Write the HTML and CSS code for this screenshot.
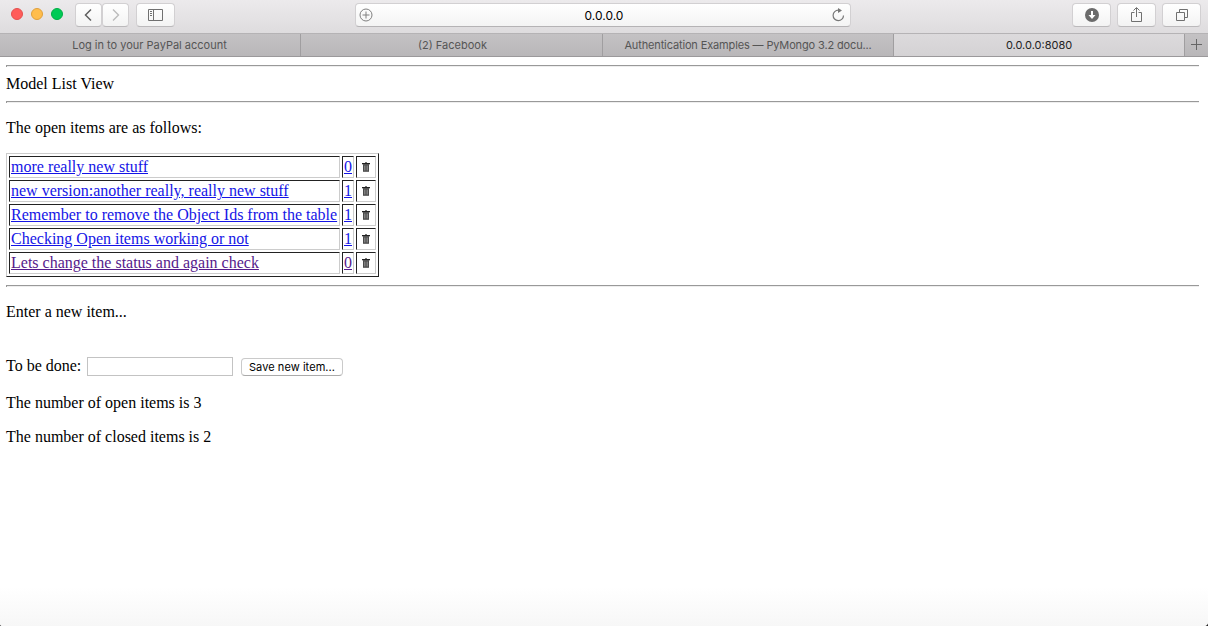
FILE: index.html
```html
<!DOCTYPE html>
<html lang="en">
<head>
<meta charset="utf-8">
<title>0.0.0.0:8080</title>
<link rel="stylesheet" href="styles.css">
</head>
<body>
<svg class="defs" width="0" height="0">
  <symbol id="trash" viewBox="0 0 8 10">
    <rect x="3" y="0" width="2" height="1" fill="#777"/>
    <rect x="0" y="1" width="8" height="1" fill="#222"/>
    <rect x="0.600" y="2" width="6.800" height="1" fill="#555"/>
    <rect x="1" y="3" width="6" height="6.800" fill="#4a4a4a"/>
    <path d="M2.500 3.500v5M4 3.500v5M5.500 3.500v5" fill="none" stroke="#999" stroke-width=".7"/>
  </symbol>
</svg>
<header class="toolbar">
  <div class="lights"><i class="light red"></i><i class="light amber"></i><i class="light green"></i></div>
  <div class="nav">
    <span class="btn back"><svg width="26" height="22" viewBox="0 0 26 22"><path d="M15 5.500 9.500 11l5.500 5.500" fill="none" stroke="#5f5f5f" stroke-width="1.500"/></svg></span>
    <span class="btn forward"><svg width="26" height="22" viewBox="0 0 26 22"><path d="M10 5.500 15.500 11 10 16.500" fill="none" stroke="#bbb" stroke-width="1.400"/></svg></span>
  </div>
  <span class="btn wide sidebar"><svg width="37" height="22" viewBox="0 0 37 22"><path d="M11.500 5.500h14v11h-14zM16.500 5.500v11M13 7.500h2M13 9.500h2M13 11.500h2" fill="none" stroke="#707070"/></svg></span>
  <div class="address">
    <svg width="14" height="14" viewBox="0 0 14 14"><circle cx="7" cy="7" r="6" fill="none" stroke="#808080"/><path d="M7 3.500v7M3.500 7h7" stroke="#808080"/></svg>
    <span class="host">0.0.0.0</span>
    <svg width="14" height="14" viewBox="0 0 14 14"><path d="M7.500 2.200A5.200 5.200 0 1 0 12.500 7.400" fill="none" stroke="#777" stroke-width="1.200"/><path d="M7 0v5l4-2.500z" fill="#777"/></svg>
  </div>
  <div class="actions">
    <span class="btn wide"><svg width="37" height="22" viewBox="0 0 37 22"><circle cx="19" cy="11" r="7" fill="#6b6b6b"/><path d="M18 7h2v4h2.500L19 15l-3.500-4H18z" fill="#fff"/></svg></span>
    <span class="btn wide"><svg width="37" height="22" viewBox="0 0 37 22"><path d="M16.500 8.500h-3v9h10v-9h-3M18.500 13V4M15.500 6.500l3-3 3 3" fill="none" stroke="#707070"/></svg></span>
    <span class="btn wide"><svg width="37" height="22" viewBox="0 0 37 22"><path d="M13.500 8.500h8v8h-8zM16.500 8V5.500h8v8H22" fill="none" stroke="#707070"/></svg></span>
  </div>
</header>
<nav class="tabs">
  <span class="tab t1"><b>Log in to your PayPal account</b></span>
  <span class="tab t2"><b>(2) Facebook</b></span>
  <span class="tab t3"><b>Authentication Examples — PyMongo 3.2 docu...</b></span>
  <span class="tab t4 active"><b>0.0.0.0:8080</b></span>
  <span class="tab add"><svg width="23" height="22" viewBox="0 0 23 22"><path d="M11.500 5v11M6 10.500h11" stroke="#666"/></svg></span>
</nav>
<main class="page">
  <hr>
  <div>Model List View</div>
  <hr>
  <p>The open items are as follows:</p>
  <table class="items">
    <tr><td class="name"><a href="#">more really new stuff</a></td><td class="status"><a href="#">0</a></td><td class="del"><svg width="8" height="10"><use href="#trash"/></svg></td></tr>
    <tr><td class="name"><a href="#">new version:another really, really new stuff</a></td><td class="status"><a href="#">1</a></td><td class="del"><svg width="8" height="10"><use href="#trash"/></svg></td></tr>
    <tr><td class="name"><a href="#">Remember to remove the Object Ids from the table</a></td><td class="status"><a href="#">1</a></td><td class="del"><svg width="8" height="10"><use href="#trash"/></svg></td></tr>
    <tr><td class="name"><a href="#">Checking Open items working or not</a></td><td class="status"><a href="#">1</a></td><td class="del"><svg width="8" height="10"><use href="#trash"/></svg></td></tr>
    <tr><td class="name"><a class="seen" href="#">Lets change the status and again check</a></td><td class="status"><a class="seen" href="#">0</a></td><td class="del"><svg width="8" height="10"><use href="#trash"/></svg></td></tr>
  </table>
  <hr>
  <p>Enter a new item...</p>
  <form class="new-item">
    <label for="task">To be done:</label>
    <input id="task" type="text">
    <button type="button">Save new item...</button>
  </form>
  <p>The number of open items is 3</p>
  <p>The number of closed items is 2</p>
</main>
</body>
</html>
```
FILE: styles.css
```css
* { box-sizing: border-box; }
html { background: #222; }
body {
  margin: 0;
  height: 626px;
  overflow: hidden;
  display: flex;
  flex-direction: column;
  background: #fff;
  border-radius: 0 0 4px 2px;
  color: #000;
  font: 16px/18px "Liberation Serif", serif;
}
.defs { position: absolute; }
svg { display: block; flex: none; }

.toolbar {
  flex: none;
  display: flex;
  align-items: flex-start;
  height: 34px;
  padding: 3px 7px 0 11px;
  background: linear-gradient(#eceaec, #dedcde);
  border-bottom: 1px solid #b5b3b5;
  font-family: Inter, sans-serif;
}
.lights { display: flex; gap: 8px; padding-top: 5px; width: 64px; }
.light { width: 12px; height: 12px; border-radius: 50%; border: 1px solid; }
.red { background: #ff5c5a; border-color: #e4504e; }
.amber { background: #ffbd4c; border-color: #e0a03c; }
.green { background: #00ca56; border-color: #00ae44; }
.nav { display: flex; margin-right: 7px; }
.btn {
  display: flex;
  align-items: center;
  justify-content: center;
  width: 27px;
  height: 24px;
  background: linear-gradient(#fff, #f3f3f3);
  border: 1px solid #d2d0d2;
  border-bottom-color: #bbb9bb;
  border-radius: 4px;
}
.btn.wide { width: 39px; }
.address {
  display: flex;
  align-items: center;
  justify-content: space-between;
  width: 496px;
  height: 24px;
  margin-left: 180px;
  padding: 0 5px 0 3px;
  background: linear-gradient(#fff, #f4f4f4);
  border: 1px solid #d2d0d2;
  border-bottom-color: #b5b3b5;
  border-radius: 4px;
  font-size: 12px;
}
.host { padding: 1px 0 0 4px; }
.actions { display: flex; gap: 6px; margin-left: auto; }

.tabs {
  flex: none;
  display: flex;
  height: 23px;
  border-bottom: 1px solid #9b999b;
  font: 11px/22px Inter, sans-serif;
  color: #555;
}
.tab {
  flex: none;
  display: flex;
  justify-content: center;
  background: linear-gradient(#c4c2c4, #b9b7b9);
  border-right: 1px solid #a09ea0;
  white-space: nowrap;
}
.tab b { font-weight: 400; }
.t1 { width: 301px; padding-right: 1px; }
.t2 { width: 302px; padding-left: 2px; }
.t3 { width: 291px; letter-spacing: -0.14px; }
.t4 { width: 291px; }
.tab.active { background: linear-gradient(#dcdadc, #d4d2d4); color: #222; }
.tab.add { width: 23px; border-right: 0; }

.page {
  flex: 1;
  padding: 0 9px 0 6px;
  background: linear-gradient(#fff 530px, #f7f7f7);
  border-radius: 0 0 4px 2px;
}
hr {
  height: 2px;
  margin: 8px 0;
  border: 0;
  border-top: 1px solid #999;
  border-left: 1px solid #999;
  background: #eee;
}
p { margin: 16px 0; }
.items {
  width: 373px;
  table-layout: fixed;
  border: 1px solid;
  border-color: #ccc #222 #222 #ccc;
  border-collapse: separate;
  border-spacing: 2px;
}
.items td {
  height: 22px;
  padding: 1px;
  border: 1px solid;
  border-color: #222 #ccc #ccc #222;
  white-space: nowrap;
}
.name { width: 331px; }
.status { width: 12px; }
.del { width: 20px; }
.del svg { margin: 0 auto; }
a { color: #1414e6; }
a.seen { color: #551a8b; }
.new-item {
  display: flex;
  align-items: center;
  height: 19px;
  margin: 36px 0 18px;
}
.new-item label { width: 81px; padding-bottom: 2px; }
.new-item input {
  width: 146px;
  height: 19px;
  padding: 0 2px;
  border: 1px solid #c3c3c3;
}
.new-item button {
  width: 102px;
  height: 18px;
  margin: 1px 0 0 8px;
  padding: 0;
  background: #fff;
  border: 1px solid #cacaca;
  border-bottom-color: #aaa;
  border-radius: 4px;
  font: 11px/14px Inter, sans-serif;
  letter-spacing: 0.06px;
  color: #000;
  white-space: nowrap;
}
```
